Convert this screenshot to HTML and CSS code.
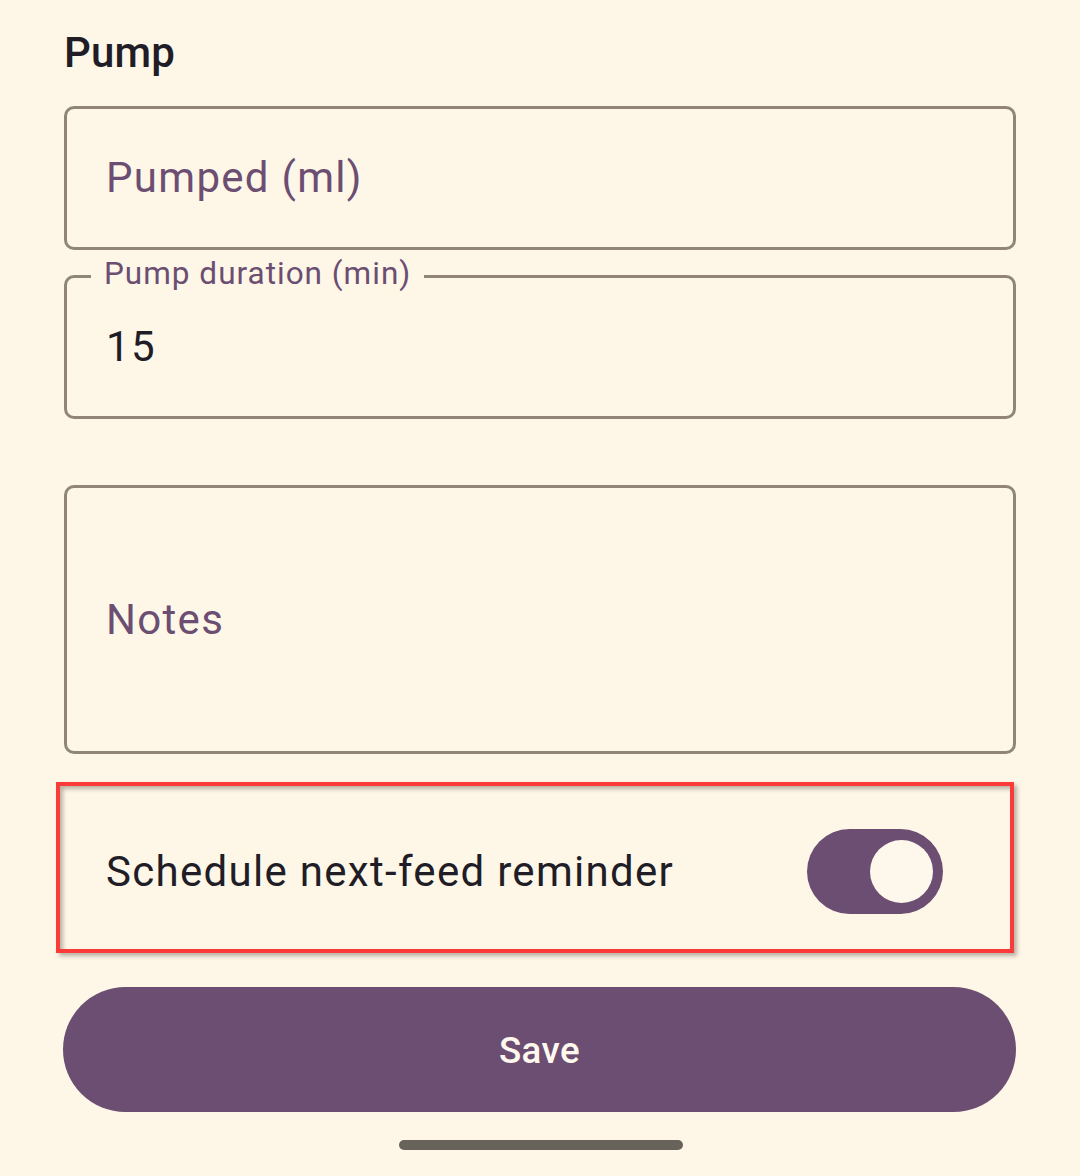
FILE: index.html
```html
<!DOCTYPE html>
<html lang="en">
<head>
<meta charset="utf-8">
<title>Pump</title>
<link rel="stylesheet" href="styles.css">
</head>
<body>
<main class="screen">
  <h1 class="section-title">Pump</h1>

  <div class="field field-single">
    <span class="placeholder">Pumped (ml)</span>
  </div>

  <div class="field field-single field-filled">
    <span class="floating-label">Pump duration (min)</span>
    <span class="value">15</span>
  </div>

  <div class="field field-notes">
    <span class="placeholder">Notes</span>
  </div>

  <div class="switch-row">
    <span class="switch-label">Schedule next-feed reminder</span>
    <div class="switch-track" role="switch" aria-checked="true">
      <div class="switch-thumb"></div>
    </div>
  </div>

  <button class="save-button" type="button">Save</button>

  <div class="home-indicator"></div>
</main>
</body>
</html>
```

FILE: styles.css
```css
* {
  box-sizing: border-box;
}

html, body {
  margin: 0;
  padding: 0;
  background: #fef7e8;
}

body {
  font-family: Roboto, "Noto Sans", "Liberation Sans", sans-serif;
  color: #211d26;
  width: 1080px;
  height: 1176px;
  overflow: hidden;
}

.screen {
  display: flex;
  flex-direction: column;
  padding: 29px 64px 0 64px;
}

.section-title {
  margin: 0;
  font-size: 42px;
  line-height: 48px;
  font-weight: 500;
  letter-spacing: 0.2px;
  color: #211d26;
  padding-left: 0;
}

.field {
  position: relative;
  display: flex;
  align-items: center;
  border: 3px solid #918578;
  border-radius: 10px;
  padding-left: 39px;
  width: 952px;
}

.field-single {
  height: 144px;
}

.field + .field {
  margin-top: 25px;
}

.section-title + .field {
  margin-top: 29px;
}

.field-notes {
  margin-top: 66px !important;
  height: 269px;
}

.placeholder,
.value {
  font-size: 42px;
  line-height: 50px;
  letter-spacing: 1.3px;
}

.placeholder {
  color: #6b4e71;
}

.value {
  color: #211d26;
  padding-top: 0;
}

.floating-label {
  position: absolute;
  left: 24px;
  top: -20px;
  padding: 0 13px;
  background: #fef7e8;
  font-size: 31.5px;
  line-height: 32px;
  letter-spacing: 1px;
  color: #6b4e71;
}

.switch-row {
  margin-top: 28px;
  margin-left: -8px;
  width: 958px;
  height: 171px;
  border: 4px solid #fb3a3a;
  box-shadow: 3px 3px 4px rgba(60, 50, 40, 0.35), inset 3px 3px 4px rgba(60, 50, 40, 0.35);
  display: flex;
  align-items: center;
  justify-content: space-between;
  padding: 43px 67px 35px 46px;
}

.switch-label {
  font-size: 42px;
  line-height: 50px;
  letter-spacing: 1.3px;
  color: #211d26;
}

.switch-track {
  width: 136px;
  height: 85px;
  border-radius: 42.5px;
  background: #6b4e71;
  display: flex;
  align-items: center;
  justify-content: flex-end;
  padding-right: 10px;
  flex-shrink: 0;
}

.switch-thumb {
  width: 63px;
  height: 63px;
  border-radius: 50%;
  background: #fef7ec;
}

.save-button {
  margin-top: 34px;
  margin-left: -1px;
  width: 953px;
  height: 125px;
  border: none;
  border-radius: 62.5px;
  background: #6b4e71;
  color: #fff8ee;
  font-family: Roboto, "Noto Sans", "Liberation Sans", sans-serif;
  font-size: 36.75px;
  font-weight: 500;
  letter-spacing: 0.4px;
  padding: 0;
  padding-top: 2px;
}

.home-indicator {
  align-self: center;
  margin-top: 28px;
  width: 284px;
  height: 10px;
  border-radius: 5px;
  background: #67625a;
  margin-left: 2px;
}
```
